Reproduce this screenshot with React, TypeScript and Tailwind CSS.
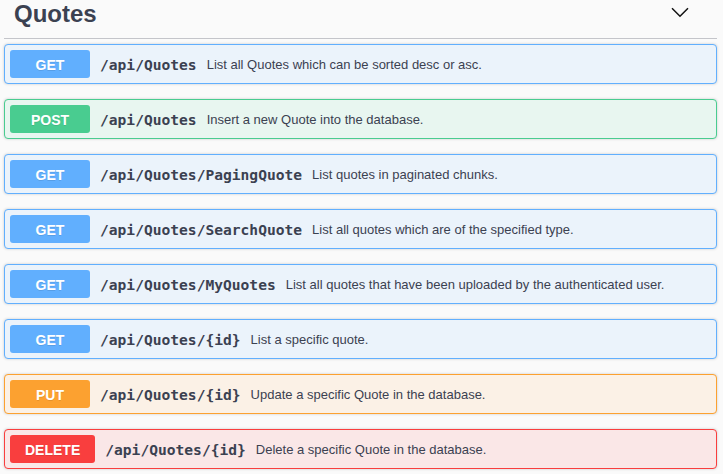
import React from "react";

type Op = { method: "GET" | "POST" | "PUT" | "DELETE"; path: string; desc: string };

const ops: Op[] = [
  { method: "GET", path: "/api/Quotes", desc: "List all Quotes which can be sorted desc or asc." },
  { method: "POST", path: "/api/Quotes", desc: "Insert a new Quote into the database." },
  { method: "GET", path: "/api/Quotes/PagingQuote", desc: "List quotes in paginated chunks." },
  { method: "GET", path: "/api/Quotes/SearchQuote", desc: "List all quotes which are of the specified type." },
  { method: "GET", path: "/api/Quotes/MyQuotes", desc: "List all quotes that have been uploaded by the authenticated user." },
  { method: "GET", path: "/api/Quotes/{id}", desc: "List a specific quote." },
  { method: "PUT", path: "/api/Quotes/{id}", desc: "Update a specific Quote in the database." },
  { method: "DELETE", path: "/api/Quotes/{id}", desc: "Delete a specific Quote in the database." },
];

const styles: Record<Op["method"], { box: string; badge: string }> = {
  GET: { box: "border-[#61affe] bg-[#ebf3fb]", badge: "bg-[#61affe]" },
  POST: { box: "border-[#49cc90] bg-[#e8f6f0]", badge: "bg-[#49cc90]" },
  PUT: { box: "border-[#fca130] bg-[#fbf1e6]", badge: "bg-[#fca130]" },
  DELETE: { box: "border-[#f93e3e] bg-[#fae7e7]", badge: "bg-[#f93e3e]" },
};

export default function App() {
  return (
    <div className="min-h-[474px] w-[723px] bg-[#fafafa] font-['Liberation_Sans',Arial,sans-serif] text-[#3b4151]">
      <div className="ml-[4px] w-[713px]">
        <div className="flex h-[39px] items-start justify-between border-b border-[#c4c5ca] pl-[10px]">
          <h4 className="text-[24px] font-bold leading-[28px]">Quotes</h4>
          <svg width="20" height="20" viewBox="0 0 20 20" className="mr-[26px] mt-[3px]">
            <path d="M1 5.3 L9 13.3 L17 5.3" fill="none" stroke="#111" strokeWidth="1.5" />
          </svg>
        </div>
        <div className="mt-[5px] flex flex-col gap-[15px]">
          {ops.map((op, i) => (
            <div
              key={i}
              className={`flex h-[40px] items-center rounded-[4px] border px-[5px] shadow-[0_0_3px_rgba(0,0,0,0.19)] ${styles[op.method].box}`}
            >
              <span
                className={`min-w-[80px] rounded-[3px] px-[15px] pb-[5px] pt-[7px] text-center text-[14px] font-bold leading-[16px] text-white [text-shadow:0_1px_0_rgba(0,0,0,0.1)] ${styles[op.method].badge}`}
              >
                {op.method}
              </span>
              <span className="px-[10px] pt-[2px] font-['DejaVu_Sans_Mono',monospace] text-[14.6px] font-bold">
                {op.path}
              </span>
              <span className="pt-[2px] text-[13px]">{op.desc}</span>
            </div>
          ))}
        </div>
      </div>
    </div>
  );
}
